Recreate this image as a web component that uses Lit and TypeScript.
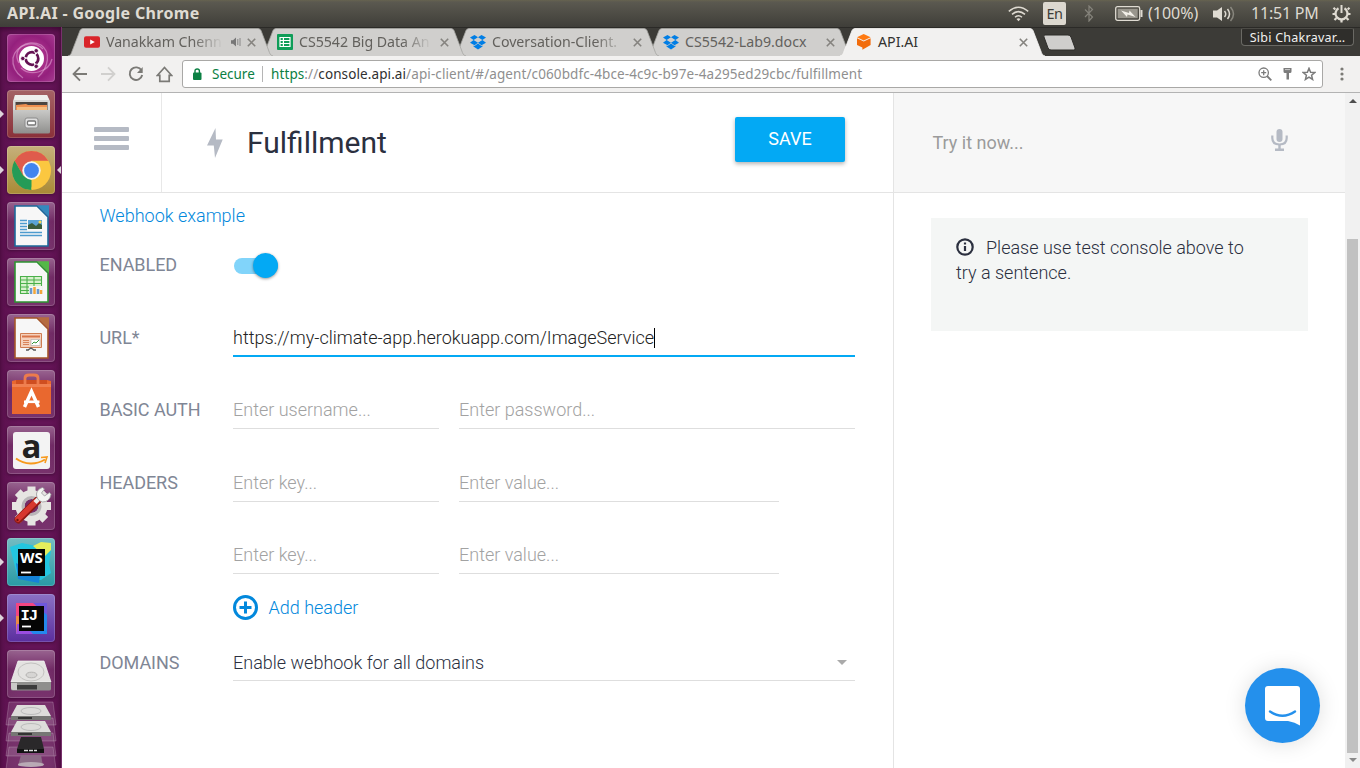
import { LitElement, html, css, svg } from "lit";
import { customElement, property } from "lit/decorators.js";

const dropbox = svg`<g fill="#007ee5"><path d="M4.5 1 8 3.3 3.6 6 0 3.4zM11.5 1 8 3.3 12.4 6 16 3.4zM0 8.7 3.6 6 8 8.7 4.5 11.2zM16 8.7 12.4 6 8 8.7l3.5 2.5zM8 9.6l3.5 2.4 1-.6v1.2L8 15.5l-4.5-2.9v-1.2l1 .6z"/></g>`;

const favicons: Record<string, unknown> = {
  youtube: svg`<rect y="2.3" width="16" height="11.4" rx="2" fill="#d9252a"/><path d="M6.2 5.5v5l4.6-2.5z" fill="#fff"/>`,
  sheets: svg`<rect width="16" height="16" rx="1" fill="#0f9d58"/><path d="M3 3.5h10v9H3zM3 6.5h10M3 9.5h10M6.4 3.5v9" fill="none" stroke="#fff" stroke-width="1.2"/>`,
  dropbox,
  api: svg`<path d="M7.7 0 14.6 3.2 7.7 6.6 1 3.2z" fill="#ff7a12"/><path d="M1 4.2 7.7 7.6 14.6 4.2V11L6.4 15.8V13.6L1 11z" fill="#f26c0c"/>`,
};

@customElement("browser-tab")
export class BrowserTab extends LitElement {
  @property() label = "";
  @property() icon = "";
  @property({ type: Boolean, reflect: true }) active = false;
  @property({ type: Boolean }) faded = false;
  @property({ type: Boolean }) audio = false;
  static styles = css`
    :host { display: grid; grid-template-columns: 205px; width: 205px; height: 28px; flex: none; margin-right: -12px; position: relative; }
    .shape, .row { grid-area: 1 / 1; }
    .row { display: flex; align-items: center; padding: 0 17.5px 0 16px; height: 28px; z-index: 1; min-width: 0; box-sizing: border-box; }
    .fav { width: 16px; height: 16px; flex: none; margin-right: 6px; }
    .label { flex: 1; min-width: 0; white-space: nowrap; font: 14.2px/20px "Noto Sans", sans-serif; color: #63615d; }
    :host([active]) .label { color: #33322f; }
    .faded { letter-spacing: -.04px; -webkit-mask-image: linear-gradient(90deg, #000 calc(100% - 30px), transparent); mask-image: linear-gradient(90deg, #000 calc(100% - 30px), transparent); }
    .audio { flex: none; width: 10px; height: 10px; margin: 0 5px 0 8px; }
    .close { flex: none; width: 9px; height: 9px; margin-left: 8px; }
    .audio + .close { margin-left: 1px; }
  `;
  render() {
    return html`
      <svg class="shape" width="205" height="28" viewBox="0 0 205 28">
        <path d="M0 28C3 27 3 26 4.500 22L12 2.500Q13 .5 15 .5H190Q192 .5 193 2.500L200.500 22C202 26 202 27 205 28z" fill=${this.active ? "#f2f1f0" : "#d0cfcd"} />
        <path d="M0 28C3 27 3 26 4.500 22L12 2.500Q13 .5 15 .5H190Q192 .5 193 2.500L200.500 22C202 26 202 27 205 28" fill="none" stroke=${this.active ? "#f7f6f5" : "#a5a4a1"} stroke-width=".8" />
      </svg>
      <div class="row">
        <svg class="fav" viewBox="0 0 16 16">${favicons[this.icon]}</svg>
        <span class="label ${this.faded ? "faded" : ""}">${this.label}</span>
        ${this.audio ? html`<svg class="audio" viewBox="0 0 10 10"><path d="M0 3.300h2L5 .5v9L2 6.700H0z" fill="#777"/><path d="M6.800 2v6M9 1v8" stroke="#888" fill="none"/></svg>` : ""}
        <svg class="close" viewBox="0 0 9 9"><path d="m.8.8 7.400 7.400M8.200.8.8 8.200" stroke="#85837f" stroke-width="1.600"/></svg>
      </div>`;
  }
}

const disk = svg`<path d="M11 11h26l7 21H4z" fill="#e4e3e1" stroke="#f6f6f6" stroke-width=".7"/><path d="M4 32h40v7q0 1.500-2 1.500H6Q4 40.500 4 39z" fill="#8f8f8d"/><path d="M4 33h6v7H6q-2 0-2-2z" fill="#c9c9c7"/><path d="M10 35h20v4.500H10z" fill="#3b3b3b"/><ellipse cx="24" cy="22" rx="13" ry="9" fill="none" stroke="#c3c2c0"/><ellipse cx="24.500" cy="25" rx="5.500" ry="2.800" fill="#d6d5d3" stroke="#b5b4b2"/>`;
const office = (edge: string, fold: string, body: unknown) => svg`<path d="M8 4h22l11 11v29H8z" fill="#f7f7f7" stroke=${edge} stroke-width="1.600"/><path d="M30 3.200h12V15z" fill=${fold}/>${body}`;

const launcher: { id: string; run?: boolean; focus?: boolean; art: unknown }[] = [
  { id: "dash", art: svg`<g fill="none" stroke="#e9b5df" stroke-opacity=".5" stroke-width="1.300"><path d="M12 29C4 15 20 4 34 11 44 18 42 33 31 43"/><path d="M36 15C26 5 9 11 6 24c-1 8 3 15 10 20"/><path d="M14 34c10 9 28 4 31-9"/></g><circle cx="24.500" cy="24.500" r="12.500" fill="#fff"/><circle cx="25" cy="24.500" r="6.300" fill="none" stroke="#641153" stroke-width="2.700" stroke-dasharray="11.700 1.500" stroke-dashoffset="5.850"/><g fill="#641153" stroke="#fff" stroke-width=".8"><circle cx="15.800" cy="24.500" r="2.200"/><circle cx="29.200" cy="16.700" r="2.200"/><circle cx="29.200" cy="32.300" r="2.200"/></g>` },
  { id: "files", run: true, art: svg`<path d="M8 5h32l3 6v9H6v-9z" fill="#d8d8d6"/><path d="M8 5h32l2 5H7z" fill="#efefed"/><path d="M8.500 12h32v9h-32z" fill="#4b4540"/><path d="M9 15l10-1 2 1h19v6H9z" fill="#ee9050"/><path d="M10 17h30v4H10z" fill="#f4be82"/><path d="M6 20h37v22q0 1.500-2 1.500H8q-2 0-2-1.500z" fill="url(#metal)"/><rect x="18" y="28" width="13" height="10" rx="2" fill="#ddd" stroke="#8b8b8b"/><rect x="20.500" y="31" width="8" height="4" rx="1" fill="#fff" stroke="#777" stroke-width="1.300"/>` },
  { id: "chrome", run: true, focus: true, art: svg`<circle cx="24.500" cy="24.500" r="19.500" fill="#fbc740"/><path d="M7.600 14.800A19.500 19.500 0 0 1 41.400 14.800H24.500L16 29.400z" fill="#df5b4c"/><path d="M7.600 14.800 16.100 29.400 24.500 34l0 10A19.500 19.500 0 0 1 7.600 14.800z" fill="#259b57"/><path d="m24 44 8.900-14.600-6 3.500z" fill="#fbc740"/><circle cx="24.500" cy="24.500" r="9.200" fill="#f4f4f4"/><circle cx="24.500" cy="24.500" r="7.400" fill="#4384f0"/>` },
  { id: "writer", art: office("#1c6a9b", "#3489bd", svg`<path d="M13 18.500h7M13 21.500h7M13 24.500h7M13 27.500h7M13 30.500h22M13 33.500h22" stroke="#4d9bce" stroke-width="1.600"/><path d="M21 18h14v9H21z" fill="#5aa3d5"/><path d="M21 27v-4l4-2 4 3 3-3 3 2v4z" fill="#3a5d3c"/><circle cx="33" cy="20" r="1.500" fill="#f8d54a"/>`) },
  { id: "calc", art: office("#2e9432", "#54b848", svg`<path d="M13.500 18.500h21v17h-21z" fill="#d8f1cd"/><path d="M13.500 18.500h21v17h-21zM13.500 22h21M13.500 25.500h21M13.500 29h21M13.500 32.500h21M20 18v18M27 18v18" fill="none" stroke="#4ab04a" stroke-width="1.100"/><path d="M22 28h13v8H22z" fill="#f5f5f5"/><path d="M24 30v6M31 31v5" stroke="#6a9ad0" stroke-width="2.500"/><path d="M27.500 29v7M34 32v4" stroke="#f2a63b" stroke-width="2.500"/>`) },
  { id: "impress", art: office("#a5562a", "#b66c40", svg`<path d="M13.500 19.500h21v14h-21z" fill="#f5d2bd" stroke="#cf7d51"/><path d="M15 22.500h18" stroke="#d87549" stroke-width="2"/><path d="M16 26.500h6M16 28.500h6M16 30.500h6" stroke="#d9845b"/><path d="M24 25.500h9v6h-9z" fill="#fff" stroke="#aaa" stroke-width=".6"/><path d="m25 30 2-2 2 1 3-3" stroke="#35993b" fill="none"/><path d="M21 36l3-2 3 2M19 36h3M26 36h3" stroke="#555" stroke-width="1.400" fill="none"/>`) },
  { id: "store", art: svg`<path d="M5 11l4-1h31l4 1v33H5z" fill="#e9682f"/><path d="M9 10h31v4H9z" fill="#cf4e20"/><path d="M18 14V8q0-3 4-3h5q4 0 4 3v6" fill="none" stroke="#ec7b4c" stroke-width="2.800"/><path d="M5 14h39v3H5z" fill="#f08050"/><path d="M17.500 37 24.500 21.500 31.500 37" fill="none" stroke="#fff" stroke-width="3.400"/><path d="M17 31.800h15.500" stroke="#fff" stroke-width="2.600"/>` },
  { id: "amazon", art: svg`<rect x="6" y="6" width="37" height="37" rx="3" fill="#f3f3f3"/><text class="amz" x="24.500" y="31.500" text-anchor="middle">a</text><path d="M9 32.500c9 6.500 20 6.500 29 1" fill="none" stroke="#f79a1d" stroke-width="2"/><path d="m34 31.500 6-.5-2 6" fill="none" stroke="#f79a1d" stroke-width="1.600"/>` },
  { id: "settings", art: svg`<g transform="translate(24.500 24)" fill="none"><circle r="11.500" stroke="#e6e5e2" stroke-width="9"/><path d="M0-19.500V-15M0 15V19.500M-19.500 0H-15M15 0H19.500M-13.800-13.800-10.600-10.600M10.600 10.600 13.800 13.800M13.800-13.800 10.600-10.600M-10.600 10.600-13.800 13.800" stroke="#e6e5e2" stroke-width="8"/><circle r="8.500" stroke="#b9b6b8" stroke-width="3"/></g><path d="M30 19 11.500 37.500" stroke="#8f1a16" stroke-width="8" stroke-linecap="round"/><path d="M29.500 19 11 37" stroke="#d7382f" stroke-width="5.500" stroke-linecap="round"/><path d="m28 20.500 6-6" stroke="#ececea" stroke-width="4.500"/><path d="M35.500 5.500q-5.500 1.500-6 6.500 0 6.500 6 8 7 0 8.500-7.500l-1.500-2-5 3.500-3-3 3-4z" fill="#f4f4f2" stroke="#98979a" stroke-width=".8"/><circle cx="10.500" cy="38" r="1.200" fill="#6e1210"/>` },
  { id: "webstorm", run: true, art: svg`<path d="m3 9 12-4 14 3 10-3 5 8-2 13 2 9-10 7-18 0-6-5z" fill="#24c6df"/><path d="m26 8 8-4 10 1 0 7-6 6z" fill="#e4ee5c"/><path d="M9 25l2 16 21 4 1-8z" fill="#1583d8"/><rect x="11" y="11" width="27" height="27" fill="#050505"/><text class="jet" x="24.500" y="25" text-anchor="middle">WS</text><path d="M14 34.500h10" stroke="#fff" stroke-width="1.800"/>` },
  { id: "intellij", run: true, art: svg`<path d="M9 9h31v31H9z" fill="#2488ed"/><path d="M9 9h22L13 32 9 28z" fill="#f44582"/><path d="M9 22h6v18H9z" fill="#ec8a45"/><path d="M10 30h6l10 10H9z" fill="#9a4de0"/><path d="M26 9h14v12z" fill="#6e58dc"/><rect x="12" y="12" width="25" height="25" fill="#050505"/><text class="jet ij" x="13.500" y="26">IJ</text><path d="M15 32.500h9" stroke="#fff" stroke-width="1.800"/>` },
  { id: "disk", art: disk },
];

@customElement("app-launcher")
export class AppLauncher extends LitElement {
  static styles = css`
    :host { display: flex; flex-direction: column; width: 62px; box-sizing: border-box; padding-top: 7px; overflow: hidden; background: linear-gradient(90deg, #5c114e, #641457 30%, #641457 80%, #5a104c); border-right: 1px solid #77316b; box-shadow: inset 0 3px 4px rgba(30,0,25,.45); }
    .slot { display: grid; grid-template-columns: 7px 48px 6px; align-items: center; height: 48px; margin-bottom: 8px; flex: none; }
    .tile { width: 48px; height: 48px; grid-column: 2; box-sizing: border-box; border-radius: 4px; background: linear-gradient(rgba(255,255,255,.34), rgba(255,255,255,.1) 40%, rgba(255,255,255,.13)); box-shadow: inset 0 0 0 1px rgba(255,255,255,.17), 0 1px 3px rgba(25,0,20,.4); }
    .tile svg { display: block; overflow: visible; }
    .dash { background: radial-gradient(circle, #c8489e, #94207d 65%, #a73d92); }
    .files { background: linear-gradient(#a46366, #8a3039); }
    .chrome { background: linear-gradient(#c6b07b, #a98a36); }
    .webstorm { background: linear-gradient(#74bcc2, #299aa5); }
    .intellij { background: linear-gradient(#8b71c5, #5b2e9e); }
    .pip { width: 4px; height: 8px; fill: #ddd4db; grid-row: 1; }
    .left { grid-column: 1; } .right { grid-column: 3; justify-self: end; }
    .amz { font: 700 33px "Open Sans", sans-serif; fill: #222; }
    .jet { font: 700 15px "Noto Sans", sans-serif; fill: #fff; }
    .ij { font: 700 15.500px "Liberation Mono", monospace; letter-spacing: -1px; }
    .stack { display: block; flex: none; margin-top: -6px; }
  `;
  render() {
    return html`
      ${launcher.map((a) => html`<div class="slot">
        ${a.run ? html`<svg class="pip left" viewBox="0 0 4 8"><path d="M0 0l4 4-4 4z"/></svg>` : ""}
        <div class="tile ${a.id}"><svg width="48" height="48" viewBox="0 0 48 48"><defs><linearGradient id="metal" x2="0" y2="1"><stop stop-color="#c9c9c7"/><stop offset="1" stop-color="#8f8f8d"/></linearGradient></defs>${a.art}</svg></div>
        ${a.focus ? html`<svg class="pip right" viewBox="0 0 4 8"><path d="M4 0 0 4l4 4z"/></svg>` : ""}
      </div>`)}
      <svg class="stack" width="61" height="68" viewBox="0 0 61 68">
        <g fill="#fff" fill-opacity=".13" stroke="#fff" stroke-opacity=".2"><path d="M9 2h44l3 23H6z"/><path d="M9 18h44l3 23H6z"/><path d="M9 33h44l3 23H6z"/><path d="M9 47h44l3 22H6z"/></g>
        <path d="M17 5h28l6 11H11z" fill="#dddcda"/><path d="M11 16h40v4H11z" fill="#767674"/><path d="M18 17h14v2H18z" fill="#333"/><ellipse cx="31" cy="11" rx="10" ry="3.500" fill="none" stroke="#bbb"/>
        <path d="M17 21h28l6 11H11z" fill="#dddcda"/><path d="M11 32h40v4H11z" fill="#767674"/><path d="M18 33h14v2H18z" fill="#333"/><ellipse cx="31" cy="27" rx="10" ry="3.500" fill="none" stroke="#bbb"/>
        <path d="M21 37h20l3 12H17z" fill="#2a282a"/><path d="M17 49h27v4H17z" fill="#111"/><path d="M24 50.500h13" stroke="#ddd" stroke-width="1.500" stroke-dasharray="4 1"/>
        <path d="M21 55h20l2 11H18z" fill="#8c6a86"/><ellipse cx="31" cy="64.500" rx="13" ry="2.500" fill="#b9aab5"/>
      </svg>`;
  }
}

@customElement("app-root")
export class AppRoot extends LitElement {
  static styles = css`
    :host { display: grid; grid-template: 27px 741px / 62px 1298px; width: 1360px; height: 768px; overflow: hidden; background: #fff; font-family: Roboto, sans-serif; }
    svg { flex: none; display: block; }
    .panel { grid-column: 1 / 3; display: flex; align-items: center; background: linear-gradient(#66634f 0, #5b5950 2px, #3f3e39); color: #dfdbd2; font: 15.500px/27px "Noto Sans", sans-serif; padding: 0 9px 0 7px; box-sizing: border-box; }
    .title { flex: 1; font-weight: 700; font-size: 16px; letter-spacing: .33px; white-space: nowrap; }
    .en { width: 23px; height: 23px; margin: 0 18px 0 14px; border-radius: 2px; background: #dcd8cf; color: #3d3c38; text-align: center; font-size: 14.500px; line-height: 23px; letter-spacing: -.4px; }
    .pct { margin: 0 13px 0 4px; width: 52px; white-space: nowrap; font-size: 16px; }
    .clock { width: 69px; margin: 0 12px 0 16px; white-space: nowrap; font-size: 16px; letter-spacing: -.2px; }
    .browser { display: flex; flex-direction: column; min-width: 0; }
    .strip { height: 29px; display: flex; background: #3c3b37; box-shadow: inset 0 1px #2b2a27; padding: 1px 6px 0; box-sizing: border-box; flex: none; }
    .strip browser-tab:nth-of-type(1) { z-index: 4; }
    .strip browser-tab:nth-of-type(2) { z-index: 3; }
    .strip browser-tab:nth-of-type(3) { z-index: 2; }
    .strip browser-tab:nth-of-type(4) { z-index: 1; }
    .strip browser-tab:nth-of-type(5) { z-index: 5; }
    .plus { margin: 6px auto 0 9px; }
    .user { width: 113px; height: 18px; box-sizing: border-box; border: 1px solid #6a6964; border-top-color: #4c4b46; border-radius: 2px 2px 4px 4px; background: #2f2e2b; color: #f2f1ef; font: 12.500px/17px "Noto Sans", sans-serif; text-align: center; white-space: nowrap; letter-spacing: .25px; }
    .toolbar { height: 37px; flex: none; box-sizing: border-box; background: #f2f1f0; border-bottom: 1px solid #b3b3b3; display: flex; align-items: center; padding: 0 16px 0 10px; }
    .nav { display: flex; gap: 12px; width: 110px; flex: none; align-items: center; }
    .omni { flex: 1; min-width: 0; height: 28px; box-sizing: border-box; border: 1px solid #a9a8a6; border-radius: 3px; background: #fff; display: flex; align-items: center; padding: 0 6px 0 9px; font: 13.500px/20px "Noto Sans", sans-serif; color: #8f8f8f; white-space: nowrap; }
    .secure { color: #0b8043; margin-left: 10px; width: 43px; flex: none; }
    .bar { width: 1px; height: 16px; flex: none; background: #b5b5b5; margin: 0 8px 0 7px; }
    .address { flex: 1; letter-spacing: .1px; }
    .green { color: #0b8043; } .host { color: #303030; }
    .tools { display: flex; gap: 8.500px; align-items: center; }
    .dots { margin-left: 17px; }
    .page { display: grid; grid-template: 100px 1fr / 831px 452px 15px; flex: 1; min-height: 0; }
    .head { border-bottom: 1px solid #e4e4e4; display: flex; align-items: center; box-sizing: border-box; }
    .menu { width: 100px; height: 99px; box-sizing: border-box; border-right: 1px solid #e8e8e8; display: flex; align-items: center; padding: 0 0 8px 32px; }
    .bolt { margin-left: 44.500px; }
    h1 { flex: 1; margin: 0 0 0 24.500px; font-size: 30px; font-weight: 400; line-height: 40px; color: #2b303f; }
    .save { width: 110px; height: 45px; margin: 0 48px 7px 0; padding: 0 0 2px; border: 0; border-radius: 2px; background: #03a9f4; color: #fff; font: 400 18px Roboto, sans-serif; box-shadow: 0 2px 4px rgba(0,0,0,.3); }
    .try { background: #f7f7f7; border-bottom: 1px solid #e4e4e4; border-left: 1px solid #e4e4e4; display: flex; align-items: center; justify-content: space-between; padding: 0 57.500px 0 38.500px; box-sizing: border-box; color: #9b9b9b; font-size: 18px; }
    .mic { margin-bottom: 6px; }
    .scroll { grid-area: 1 / 3 / 3 / 4; background: #f1f1f1; display: flex; flex-direction: column; align-items: center; padding: 6px 0 5px; box-sizing: border-box; }
    .thumb { width: 11px; height: 514px; background: #c1c1c1; margin: 136px 0 5px; }
    .form { padding: 0 38px 0 37.500px; font-size: 18px; font-weight: 300; color: #2b303f; }
    .link { color: #0288dc; height: 46px; line-height: 45px; }
    .row { display: grid; grid-template-columns: 133.500px 622px; align-items: center; }
    .row > label { color: #7f8695; font-weight: 400; font-size: 18px; line-height: 22px; letter-spacing: -.05px; white-space: nowrap; padding-bottom: 2px; }
    .row > .low { padding-bottom: 0; }
    .on { height: 52px; margin-bottom: 29px; }
    .fields { display: flex; gap: 20px; }
    .field { height: 36px; line-height: 34px; box-sizing: border-box; border-bottom: 1px solid #dedede; color: #a2a2a2; width: 206px; white-space: nowrap; }
    .wide { width: 396px; } .mid { width: 320px; }
    .url { height: 37px; width: 622px; border-bottom: 2px solid #03a9f4; color: #222; display: flex; align-items: center; }
    .caret { width: 1px; height: 20px; background: #000; }
    .g36 { margin-top: 36px; } .g37 { margin-top: 37px; }
    .add { height: 66px; display: flex; align-items: center; gap: 10.500px; color: #0288dc; margin-bottom: 5px; }
    .select { width: 622px; color: #2b303f; display: flex; align-items: center; justify-content: space-between; padding-right: 8px; }
    .toggle { display: flex; align-items: center; width: 44px; height: 16px; border-radius: 8px; background: #81d4fa; justify-content: flex-end; margin: 1px 0 0 1px; }
    .knob { width: 25px; height: 25px; border-radius: 50%; background: #03a9f4; box-shadow: 0 1px 3px rgba(0,0,0,.4); flex: none; }
    .side { border-left: 1px solid #e4e4e4; padding: 25px 37px 25px 37px; box-sizing: border-box; display: flex; flex-direction: column; justify-content: space-between; }
    .hint { height: 113px; box-sizing: border-box; padding: 17px 40px 0 25px; background: #f4f6f5; color: #2b303f; font-size: 18px; line-height: 25px; font-weight: 300; }
    .hint svg { display: inline-block; vertical-align: -2px; margin-right: 12px; }
    .chat { width: 75px; height: 75px; border-radius: 50%; background: #2490ec; box-shadow: 0 1px 22px rgba(0,0,0,.13); align-self: flex-end; margin-right: -12px; display: grid; place-items: center; }
  `;
  render() {
    return html`
      <header class="panel">
        <span class="title">API.AI - Google Chrome</span>
        <svg width="21" height="16" viewBox="0 0 21 16" fill="none" stroke="#dfdbd2" stroke-width="1.500"><path d="M.8 5.300Q10.500-2.800 20.200 5.300M4 8.300q6.500-5.400 13 0M7 11.300q3.500-3 7 0"/><path d="m8.500 13 2 2.300 2-2.300q-2-1.500-4 0z" fill="#dfdbd2" stroke="none"/></svg>
        <span class="en">En</span>
        <svg width="10" height="17" viewBox="0 0 10 17" fill="none" stroke="#85837b" stroke-width="1.200"><path d="m1 4.500 7.500 7.500L5 16V1l3.500 3.500L1 12"/></svg>
        <svg width="50" height="15" viewBox="-21 0 50 15" fill="none" stroke="#dfdbd2"><rect x=".7" y=".7" width="24" height="13.600" rx="1.800" stroke-width="1.300"/><rect x="2.700" y="2.800" width="20" height="9.400" fill="#99968d" stroke="none"/><path d="M26.500 4v7" stroke-width="2"/><path d="m6 4.500 8 2.500.5-2.500 6 6.500-8-2.500-.5 2.500z" fill="#f2efe8" stroke="none"/></svg>
        <span class="pct">(100%)</span>
        <svg width="22" height="18" viewBox="0 0 22 18"><path d="M0 5.500h4L9 2v14l-5-3.500H0z" fill="#dfdbd2"/><g fill="none" stroke="#dfdbd2" stroke-width="1.500"><path d="M11.500 6q2.500 3 0 6M14.500 4q4 5 0 10"/><path d="M17.500 2q6 7 0 14" opacity=".4"/></g></svg>
        <span class="clock">11:51 PM</span>
        <svg width="19" height="19" viewBox="0 0 19 19" fill="none" stroke="#dfdbd2"><path d="M6.500 4.300a6 6 0 1 0 6 0" stroke-width="2.300"/><path d="M9.500 1v8" stroke-width="2"/><path d="M3.300 5.500 1.500 3.800M15.700 5.500l1.800-1.700M3.500 10H.5M15.500 10h3M4.500 14l-2 2M14.500 14l2 2M9.500 15.500v3" stroke-width="2.200"/></svg>
      </header>
      <app-launcher></app-launcher>
      <div class="browser">
        <div class="strip">
          <browser-tab label="Vanakkam Chenn" icon="youtube" faded audio></browser-tab>
          <browser-tab label="CS5542 Big Data An" icon="sheets" faded></browser-tab>
          <browser-tab label="Coversation-Client." icon="dropbox" faded></browser-tab>
          <browser-tab label="CS5542-Lab9.docx" icon="dropbox"></browser-tab>
          <browser-tab label="API.AI" icon="api" active></browser-tab>
          <svg class="plus" width="34" height="18" viewBox="0 0 34 18"><path d="M3 1h23q2 0 3 2l4 11q.5 2-1 2H9q-2 0-3-2L2 3Q1 1 3 1z" fill="#cfcecc" stroke="#2d2c29"/></svg>
          <div class="user">Sibi Chakravar…</div>
        </div>
        <div class="toolbar">
          <div class="nav">
            <svg width="16" height="16" viewBox="0 0 16 16" fill="none" stroke="#7b7a76" stroke-width="1.800"><path d="M15 8H2M8 1.300 1.500 8 8 14.700"/></svg>
            <svg width="16" height="16" viewBox="0 0 16 16" fill="none" stroke="#d1d0ce" stroke-width="1.800"><path d="M1 8h13M8 1.300 14.500 8 8 14.700"/></svg>
            <svg width="16" height="16" viewBox="0 0 16 16" fill="none" stroke="#7b7a76" stroke-width="1.900"><path d="M13.500 4.500A6.300 6.300 0 1 0 14.200 9"/><path d="M14.700 1v6H9z" fill="#7b7a76" stroke="none"/></svg>
            <svg width="17" height="17" viewBox="0 0 17 17" fill="none" stroke="#7b7a76" stroke-width="1.700"><path d="M1.500 9.300 8.500 1.500l7 7.800h-2.300v6H3.800v-6z"/></svg>
          </div>
          <div class="omni">
            <svg width="10" height="12" viewBox="0 0 10 12"><rect x="1" y="4.500" width="8.500" height="7.500" rx="1" fill="#0b8043"/><path d="M3 5V3q0-2 2.200-2t2.200 2v2" fill="none" stroke="#0b8043" stroke-width="1.400"/></svg>
            <span class="secure">Secure</span><span class="bar"></span>
            <span class="address"><span class="green">https</span>://<span class="host">console.api.ai</span>/api-client/#/agent/c060bdfc-4bce-4c9c-b97e-4a295ed29cbc/fulfillment</span>
            <div class="tools">
              <svg width="14" height="14" viewBox="0 0 14 14" fill="none" stroke="#7b7b7b" stroke-width="1.300"><circle cx="5.700" cy="5.700" r="4.700"/><path d="m9 9 4.300 4.300" stroke-width="1.800"/><path d="M3.200 5.700h5M5.700 3.200v5"/></svg>
              <svg width="13" height="14" viewBox="0 0 13 14"><path d="M2.500 1h8v3.500q0 1.500-1.500 1.500H8v6.500H5.500V6H4Q2.500 6 2.500 4.500z" fill="#7b7b7b"/><path d="M4 2.600h5" stroke="#ddd" stroke-width=".8"/></svg>
              <svg width="14" height="14" viewBox="0 0 14 14" fill="none" stroke="#7b7b7b" stroke-width="1.500"><path d="m7 1.300 1.600 3.900 4.200.3-3.200 2.800 1 4.200L7 10.200l-3.600 2.300 1-4.200L1.200 5.500l4.200-.3z"/></svg>
            </div>
          </div>
          <svg class="dots" width="4" height="14" viewBox="0 0 4 14" fill="#7b7a76"><circle cx="2" cy="2" r="1.600"/><circle cx="2" cy="7" r="1.600"/><circle cx="2" cy="12" r="1.600"/></svg>
        </div>
        <main class="page">
          <div class="head">
            <div class="menu"><svg width="35" height="23" viewBox="0 0 35 23" fill="#b5bac4"><rect width="35" height="5" rx="1"/><rect y="9" width="35" height="5" rx="1"/><rect y="18" width="35" height="5" rx="1"/></svg></div>
            <svg class="bolt" width="16" height="30" viewBox="0 0 16 30"><path d="M8.500 0 0 17.500h6.800L8 30l7.700-18.500H9z" fill="#b5bac4"/></svg>
            <h1>Fulfillment</h1>
            <button class="save">SAVE</button>
          </div>
          <div class="try"><span>Try it now...</span>
            <svg class="mic" width="17" height="22" viewBox="0 0 17 22" fill="none" stroke="#b5bac4"><rect x="5.500" width="6" height="13" rx="3" fill="#b5bac4" stroke="none"/><path d="M1.300 6.500V9q0 6.500 7.200 6.500T15.700 9V6.500" stroke-width="2.200"/><path d="M8.500 15v5M4 20.800h9" stroke-width="2.400"/></svg>
          </div>
          <div class="scroll">
            <svg width="8" height="4" viewBox="0 0 8 4"><path d="M0 4 4 0l4 4z" fill="#4d4d4d"/></svg>
            <div class="thumb"></div>
            <svg width="8" height="4" viewBox="0 0 8 4"><path d="M0 0l4 4 4-4z" fill="#8a8a8a"/></svg>
          </div>
          <section class="form">
            <div class="link">Webhook example</div>
            <div class="row on"><label class="low">ENABLED</label><div class="toggle"><div class="knob"></div></div></div>
            <div class="row"><label>URL*</label><div class="field url">https://my-climate-app.herokuapp.com/ImageService<span class="caret"></span></div></div>
            <div class="row g36"><label>BASIC AUTH</label><div class="fields"><div class="field">Enter username...</div><div class="field wide">Enter password...</div></div></div>
            <div class="row g37"><label>HEADERS</label><div class="fields"><div class="field">Enter key...</div><div class="field mid">Enter value...</div></div></div>
            <div class="row g36"><span></span><div class="fields"><div class="field">Enter key...</div><div class="field mid">Enter value...</div></div></div>
            <div class="row"><span></span><div class="add"><svg width="25" height="25" viewBox="0 0 25 25" fill="none" stroke="#0288dc"><circle cx="12.500" cy="12.500" r="11" stroke-width="3"/><path d="M6.500 12.500h12M12.500 6.500v12" stroke-width="3"/></svg>Add header</div></div>
            <div class="row"><label class="low">DOMAINS</label><div class="field select">Enable webhook for all domains<svg width="10" height="5" viewBox="0 0 10 5"><path d="M0 0h10L5 5z" fill="#aaa"/></svg></div></div>
          </section>
          <aside class="side">
            <div class="hint"><svg width="18" height="18" viewBox="0 0 18 18" fill="none" stroke="#2b303f"><circle cx="9" cy="9" r="7.700" stroke-width="2.200"/><path d="M9 8v5" stroke-width="2.200"/><path d="M9 4.500v2" stroke-width="2.200"/></svg>Please use test console above to try a sentence.</div>
            <div class="chat"><svg width="37" height="41" viewBox="0 0 37 41"><path d="M4 1h29q3 0 3 3v36.500Q31 37 24 36H4q-3 0-3-3V4q0-3 3-3z" fill="#fff"/><path d="M6 26.500q12.500 8.500 25 0" fill="none" stroke="#2490ec" stroke-width="2.400" stroke-linecap="round"/></svg></div>
          </aside>
        </main>
      </div>`;
  }
}
